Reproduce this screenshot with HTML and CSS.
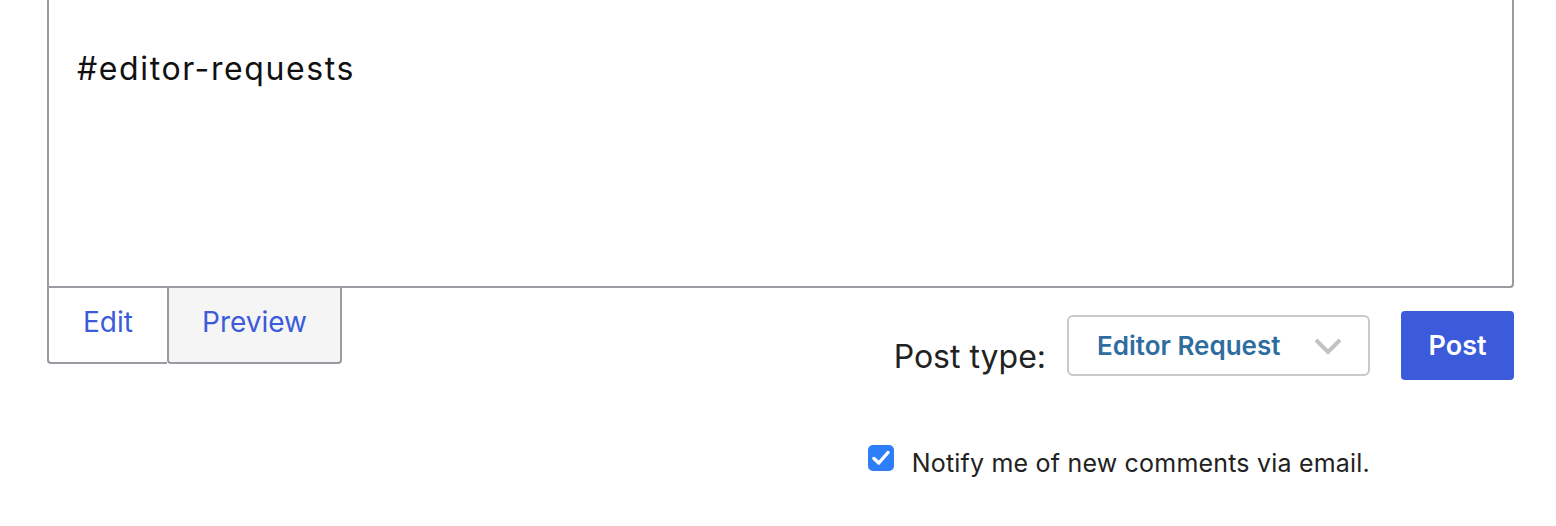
FILE: index.html
```html
<!DOCTYPE html>
<html lang="en">
<head>
    <meta charset="UTF-8">
    <meta name="viewport" content="width=device-width, initial-scale=1.0">
    <title>Comment</title>
    <link rel="stylesheet" href="styles.css">
</head>
<body>

    <div class="comentario">
        <div class="editor">#editor-requests</div>

        <div class="pie">
            <div class="pestanas">
                <div class="pestana activa">Edit</div>
                <div class="pestana vista">Preview</div>
            </div>

            <div class="controles">
                <div class="fila-post">
                    <span class="etiqueta">Post type:</span>
                    <div class="selector">
                        <span>Editor Request</span>
                        <svg class="flecha" width="28" height="18" viewBox="0 0 28 18">
                            <path d="M2 2 L14 14 L26 2" fill="none" stroke="#c2c2c2" stroke-width="4"/>
                        </svg>
                    </div>
                    <button class="boton-post">Post</button>
                </div>

                <label class="aviso">
                    <span class="casilla">
                        <svg width="18" height="16" viewBox="0 0 18 16">
                            <path d="M2 8.5 L6.8 13 L16 2.5" fill="none" stroke="#fff" stroke-width="3.4" stroke-linecap="round" stroke-linejoin="round"/>
                        </svg>
                    </span>
                    <span class="aviso-texto">Notify me of new comments via email.</span>
                </label>
            </div>
        </div>
    </div>

</body>
</html>
```

FILE: styles.css
```css
body {
    margin: 0;
    font-family: 'Inter', 'Noto Sans', sans-serif;
    background: #fff;
    color: #222;
    overflow: hidden;
}

.comentario {
    padding: 0 42px 0 47px;
}

.editor {
    box-sizing: border-box;
    height: 288px;
    border: 2px solid #999ba0;
    border-top: none;
    border-bottom-right-radius: 4px;
    padding: 49px 28px 0;
    font-size: 32px;
    line-height: 40px;
    letter-spacing: 1.6px;
    color: #111;
}

.pie {
    display: flex;
    justify-content: space-between;
}

.pestanas {
    display: flex;
    align-items: flex-start;
}

.pestana {
    box-sizing: border-box;
    height: 76px;
    padding-top: 17px;
    text-align: center;
    font-size: 28px;
    line-height: 34px;
    color: #3b5bdb;
    border-bottom: 2px solid #999ba0;
}

.pestana.activa {
    width: 120px;
    border-left: 2px solid #999ba0;
    border-bottom-left-radius: 4px;
}

.pestana.vista {
    width: 175px;
    background: #f5f5f5;
    border-left: 2px solid #999ba0;
    border-right: 2px solid #999ba0;
    border-radius: 0 0 4px 4px;
}

.controles {
    display: flex;
    flex-direction: column;
    align-items: flex-end;
    padding-top: 23px;
}

.fila-post {
    display: flex;
    align-items: center;
}

.etiqueta {
    font-size: 32px;
    line-height: 38px;
    margin-top: 22px;
    margin-right: 21px;
}

.selector {
    box-sizing: border-box;
    width: 303px;
    height: 61px;
    border: 2px solid #c9c9c9;
    border-radius: 6px;
    display: flex;
    align-items: center;
    justify-content: space-between;
    padding: 0 26px 0 28px;
    font-size: 26px;
    font-weight: 600;
    color: #2f6d9f;
    margin-right: 31px;
}

.flecha {
    margin-top: 2px;
}

.boton-post {
    width: 113px;
    height: 69px;
    border: none;
    border-radius: 4px;
    background: #3b5bdb;
    color: #fff;
    font-family: inherit;
    font-size: 27px;
    font-weight: 600;
    padding: 0;
}

.aviso {
    display: flex;
    align-items: flex-start;
    gap: 18px;
    margin-top: 65px;
    margin-right: 144px;
    font-size: 25px;
    line-height: 30px;
    letter-spacing: 0.2px;
    color: #222;
}

.aviso-texto {
    margin-top: 3px;
}

.casilla {
    width: 26px;
    height: 26px;
    border-radius: 5px;
    background: #2d7ff9;
    display: flex;
    align-items: center;
    justify-content: center;
}
```
